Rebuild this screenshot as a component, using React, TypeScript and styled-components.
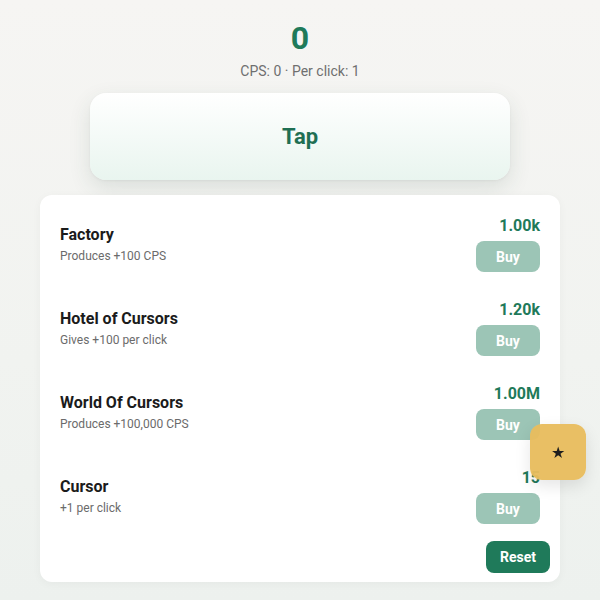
import React from "react";
import styled, { createGlobalStyle } from "styled-components";

const Global = createGlobalStyle`
  html, body { margin: 0; padding: 0; }
  body {
    font-family: Roboto, "Noto Sans", Arial, sans-serif;
    background: linear-gradient(180deg, #f6f5f3 0%, #f1f3f0 60%, #edf1ee 100%);
    min-height: 600px;
  }
  * { box-sizing: border-box; }
`;

const Page = styled.div`
  width: 600px;
  min-height: 600px;
  padding: 19px 40px 18px;
  display: flex;
  flex-direction: column;
  align-items: center;
`;

const Score = styled.div`
  font-size: 32px;
  font-weight: 700;
  color: #1f7a5a;
  line-height: 38px;
`;

const Stats = styled.div`
  font-size: 14px;
  color: #6f6f6f;
  line-height: 18px;
  margin-top: 5px;
`;

const TapButton = styled.button`
  margin-top: 13px;
  width: 420px;
  height: 87px;
  border: none;
  border-radius: 16px;
  background: linear-gradient(180deg, #ffffff 0%, #e9f5ef 100%);
  box-shadow: 0 8px 22px rgba(40, 70, 55, 0.12), 0 1px 3px rgba(0, 0, 0, 0.05);
  font-family: inherit;
  font-size: 22px;
  font-weight: 700;
  color: #1f6f53;
  cursor: pointer;
`;

const Shop = styled.div`
  margin-top: 15px;
  width: 520px;
  background: #ffffff;
  border-radius: 12px;
  padding: 7px 10px 9px;
  box-shadow: 0 2px 10px rgba(0, 0, 0, 0.04);
  display: flex;
  flex-direction: column;
`;

const Row = styled.div`
  display: flex;
  align-items: center;
  justify-content: space-between;
  padding: 12px 10px 14px;
`;

const Info = styled.div`
  display: flex;
  flex-direction: column;
  gap: 3px;
  padding-top: 2px;
`;

const Name = styled.div`
  font-size: 16px;
  font-weight: 700;
  color: #1b1b1b;
  line-height: 20px;
`;

const Desc = styled.div`
  font-size: 12px;
  color: #6b6b6b;
  line-height: 16px;
`;

const Side = styled.div`
  display: flex;
  flex-direction: column;
  align-items: flex-end;
  gap: 3px;
`;

const Price = styled.div`
  font-size: 16px;
  font-weight: 700;
  color: #1f7a5a;
  line-height: 24px;
`;

const Button = styled.button<{ $primary?: boolean }>`
  border: none;
  border-radius: 8px;
  width: 64px;
  height: ${(p) => (p.$primary ? "32px" : "31px")};
  background: ${(p) => (p.$primary ? "#1f7a5a" : "#9cc5b6")};
  color: #ffffff;
  font-family: inherit;
  font-size: 14px;
  font-weight: 700;
  cursor: pointer;
`;

const Footer = styled.div`
  display: flex;
  justify-content: flex-end;
  margin-top: 3px;
`;

const Badge = styled.div`
  position: fixed;
  left: 530px;
  top: 424px;
  width: 56px;
  height: 56px;
  border-radius: 12px;
  background: rgba(232, 188, 94, 0.96);
  box-shadow: 0 6px 16px rgba(0, 0, 0, 0.1);
  display: flex;
  align-items: center;
  justify-content: center;
  font-size: 16px;
  color: #1d1d1d;
`;

const items = [
  { name: "Factory", desc: "Produces +100 CPS", price: "1.00k" },
  { name: "Hotel of Cursors", desc: "Gives +100 per click", price: "1.20k" },
  { name: "World Of Cursors", desc: "Produces +100,000 CPS", price: "1.00M" },
  { name: "Cursor", desc: "+1 per click", price: "15" },
];

export default function App() {
  return (
    <>
      <Global />
      <Page>
        <Score>0</Score>
        <Stats>CPS: 0 · Per click: 1</Stats>
        <TapButton>Tap</TapButton>
        <Shop>
          {items.map((it) => (
            <Row key={it.name}>
              <Info>
                <Name>{it.name}</Name>
                <Desc>{it.desc}</Desc>
              </Info>
              <Side>
                <Price>{it.price}</Price>
                <Button>Buy</Button>
              </Side>
            </Row>
          ))}
          <Footer>
            <Button $primary>Reset</Button>
          </Footer>
        </Shop>
      </Page>
      <Badge>★</Badge>
    </>
  );
}
